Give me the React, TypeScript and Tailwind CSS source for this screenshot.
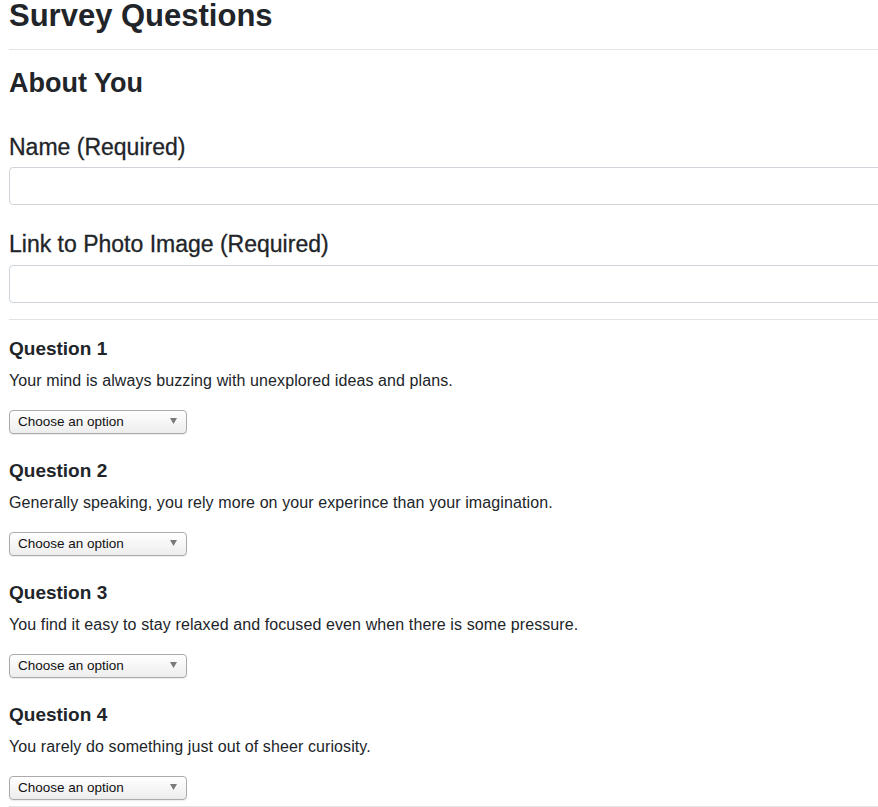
const questions = [
  'Your mind is always buzzing with unexplored ideas and plans.',
  'Generally speaking, you rely more on your experince than your imagination.',
  'You find it easy to stay relaxed and focused even when there is some pressure.',
  'You rarely do something just out of sheer curiosity.',
]

const OptionSelect = () => {
  return (
    <div className="relative mt-[20px] w-[178px] h-[24px]">
      <select
        defaultValue=""
        className="appearance-none w-full h-full rounded-[4px] border border-[#aaaaaa] bg-gradient-to-b from-white to-[#ededed] pl-[8px] text-[13.5px] text-[#111] shadow-[0_1px_1px_rgba(0,0,0,0.08)] outline-none"
      >
        <option value="">Choose an option</option>
        <option value="1">Strongly agree</option>
        <option value="2">Agree</option>
        <option value="3">Neutral</option>
        <option value="4">Disagree</option>
        <option value="5">Strongly disagree</option>
      </select>
      <svg
        className="pointer-events-none absolute left-[161px] top-[9px]"
        width="7"
        height="6"
        viewBox="0 0 7 6"
      >
        <path d="M0 0 L7 0 L3.5 6 Z" fill="#7a7a7a" />
      </svg>
    </div>
  )
}

const App = () => {
  return (
    <div
      className="w-[878px] h-[807px] overflow-hidden bg-white text-[#212529]"
      style={{ fontFamily: '"Liberation Sans", Arial, sans-serif' }}
    >
      <div className="w-[920px] pl-[9px]">
        <h1 className="text-[31px] leading-[31px] font-bold">Survey Questions</h1>
        <hr className="mt-[18px] border-0 border-t border-[#e3e3e3]" />

        <h2 className="mt-[19px] text-[27px] leading-[28px] font-bold">About You</h2>

        <label className="block mt-[39px] text-[23px] leading-[23px] [-webkit-text-stroke:0.3px_#212529]">
          Name (Required)
        </label>
        <input
          type="text"
          className="block mt-[8px] w-full h-[38px] rounded-[4px] border border-[#ced4da] bg-white px-3 outline-none"
        />

        <label className="block mt-[28px] text-[23px] leading-[23px] [-webkit-text-stroke:0.3px_#212529]">
          Link to Photo Image (Required)
        </label>
        <input
          type="text"
          className="block mt-[9px] w-full h-[38px] rounded-[4px] border border-[#ced4da] bg-white px-3 outline-none"
        />

        <hr className="mt-[16px] border-0 border-t border-[#e3e3e3]" />

        {questions.map((q, i) => (
          <div key={i} className={i === 0 ? 'mt-[19px]' : 'mt-[28px]'}>
            <h4 className="text-[19px] leading-[19px] font-bold">Question {i + 1}</h4>
            <p className="mt-[15px] text-[16px] leading-[16px] tracking-[0.1px]">{q}</p>
            <OptionSelect />
          </div>
        ))}

        <hr className="mt-[7px] border-0 border-t border-[#e3e3e3]" />
      </div>
    </div>
  )
}

export default App
